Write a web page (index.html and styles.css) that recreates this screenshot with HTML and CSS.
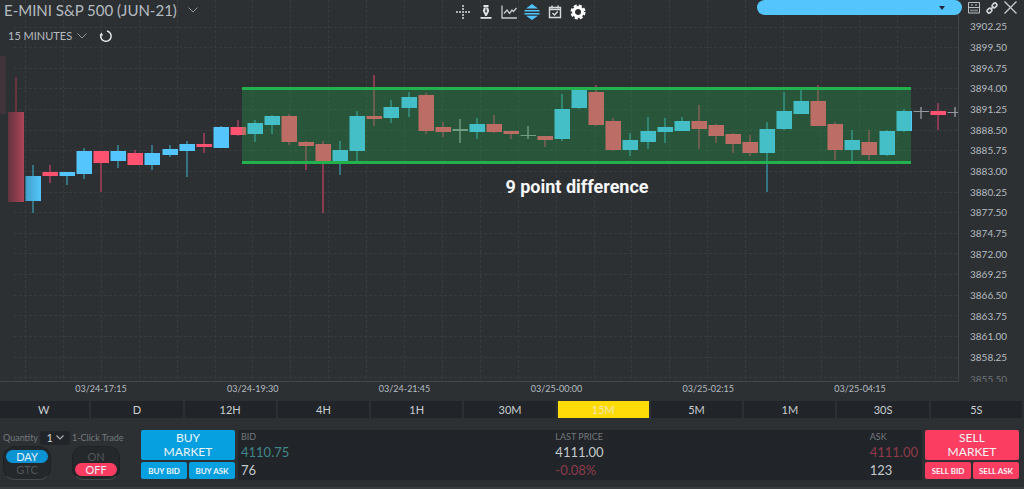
FILE: index.html
```html
<!DOCTYPE html>
<html lang="en">
<head>
<meta charset="utf-8">
<meta name="viewport" content="width=device-width, initial-scale=1">
<title>E-MINI S&amp;P 500 (JUN-21)</title>
<link rel="stylesheet" href="styles.css">
</head>
<body>
<main class="app">
  <section class="chart" aria-label="Price chart">
    <div class="plot">
      <svg class="plot-svg" id="plot" viewBox="0 0 958 381" preserveAspectRatio="none" role="img" aria-label="15 minute candles">
        <defs>
          <linearGradient id="fadeRed"><stop offset="0" stop-color="#63333d"/><stop offset="1" stop-color="#ad4557"/></linearGradient>
          <linearGradient id="fadeBlue"><stop offset="0" stop-color="#419fc8"/><stop offset="1" stop-color="#54c6fd"/></linearGradient>
        </defs>
        <g id="grid"></g>
        <rect x="0" y="56" width="6" height="58" fill="#40343a"/>
        <rect x="15" y="77" width="2" height="36" fill="#66343f"/>
        <rect x="8" y="112" width="16" height="90" fill="url(#fadeRed)"/>
        <g id="candles"></g>
        <rect x="242" y="87" width="669" height="77" fill="#22b14c" fill-opacity=".3"/>
        <rect x="242" y="87" width="669" height="3" fill="#22b14c"/>
        <rect x="242" y="161" width="669" height="3" fill="#22b14c"/>
      </svg>
      <p class="note">9 point difference</p>
    </div>
    <ol class="prices">
      <li>3902.25</li><li>3899.50</li><li>3896.75</li><li>3894.00</li><li>3891.25</li><li>3888.50</li>
      <li>3885.75</li><li>3883.00</li><li>3880.25</li><li>3877.50</li><li>3874.75</li><li>3872.00</li>
      <li>3869.25</li><li>3866.50</li><li>3863.75</li><li>3861.00</li><li>3858.25</li><li class="fading">3855.50</li>
    </ol>
    <ol class="times">
      <li>03/24-17:15</li><li>03/24-19:30</li><li>03/24-21:45</li><li>03/25-00:00</li><li>03/25-02:15</li><li>03/25-04:15</li>
    </ol>

    <header class="topbar">
      <div class="heading">
        <label class="pick pick-title">
          <select aria-label="Contract"><option>E-MINI S&amp;P 500 (JUN-21)</option></select>
          <svg width="10" height="6" viewBox="0 0 10 6"><path d="M0.5 0.5 5 5 9.5 0.5" fill="none" stroke="#8e979b"/></svg>
        </label>
        <div class="interval">
          <label class="pick pick-interval">
            <select aria-label="Interval"><option>15 MINUTES</option></select>
            <svg width="10" height="6" viewBox="0 0 10 6"><path d="M0.5 0.5 5 5 9.5 0.5" fill="none" stroke="#8e979b"/></svg>
          </label>
          <button class="icon" aria-label="Reload">
            <svg width="14" height="14" viewBox="0 0 14 14"><path d="M8 2A5.200 5.200 0 1 1 2 5.500" fill="none" stroke="#e6eaec" stroke-width="1.500"/><path d="M.5 6.500 2.500 3.500 4.200 6.500z" fill="#e6eaec"/></svg>
          </button>
        </div>
      </div>
      <div class="tools">
        <button class="icon" aria-label="Crosshair">
          <svg width="16" height="16" viewBox="0 0 16 16" fill="none" stroke="#d5dadc" stroke-width="1.500"><path d="M8 1v2M8 4v2M8 10v2M8 13v2M1 8h2M4 8h2M10 8h2M13 8h2M7 8h2"/></svg>
        </button>
        <button class="icon" aria-label="Draw">
          <svg width="16" height="16" viewBox="0 0 16 16"><path d="M5.500 1h5v2h-5zM5.800 3.500h4.400l1 3.500L8.700 12H7.300L4.800 7z" fill="#dfe3e5"/><path d="M8 4.500v2.500" stroke="#2d3033"/><circle cx="8" cy="7.500" r="1" fill="#2d3033"/><path d="M2.500 13h11v1.800h-11z" fill="#dfe3e5"/></svg>
        </button>
        <button class="icon" aria-label="Indicators">
          <svg width="16" height="16" viewBox="0 0 16 16" fill="none" stroke="#c5cbce" stroke-width="1.300"><path d="M1 1.500v12.500h15"/><path d="M3 9.500 6 6l2.500 3.500L11 6l1.500 1.500L15.500 4"/></svg>
        </button>
        <button class="icon" aria-label="Depth">
          <svg width="16" height="16" viewBox="0 0 16 16" fill="#50c3fb"><path d="M8 0l6 4.500H2zM.5 6h15v1.500H.5zM.5 9h15v1.500H.5zM2 11.800h12L8 16z"/></svg>
        </button>
        <button class="icon" aria-label="Calendar">
          <svg width="16" height="16" viewBox="0 0 16 16" fill="none" stroke="#d5dadc" stroke-width="1.400"><path d="M2.500 3.500h11v10h-11zM2.500 5.500h11M5 1.500v3M11 1.500v3M5.500 9l2 2 3.200-3.500"/></svg>
        </button>
        <button class="icon" aria-label="Settings">
          <svg width="16" height="16" viewBox="0 0 16 16" fill="none" stroke="#fff"><circle cx="8" cy="8" r="4.500" stroke-width="3"/><circle cx="8" cy="8" r="6.500" stroke-width="2" stroke-dasharray="3.100 2.005"/></svg>
        </button>
      </div>
      <div class="window-tools">
        <label class="account">
          <select aria-label="Account"><option></option></select>
          <svg width="6" height="4" viewBox="0 0 6 4"><path d="M0 0h6L3 4z" fill="#1d2a33"/></svg>
        </label>
        <button class="icon" aria-label="Layout">
          <svg width="12" height="12" viewBox="0 0 12 12" fill="none" stroke="#b9c0c3"><path d="M.5 .5h11v10.500H.5zM.5 5.500h11M3 3h2M7 3h2"/><path d="M3 7.500v2M5 7.500v2M7 7.500v2M9 7.500v2"/></svg>
        </button>
        <button class="icon" aria-label="Link">
          <svg width="12" height="12" viewBox="0 0 12 12" fill="none" stroke="#d0d6d8" stroke-width="1.600"><rect x="6" y="1.500" width="5" height="3.800" rx="1.900" transform="rotate(-45 8.500 3.400)"/><rect x="1" y="6.700" width="5" height="3.800" rx="1.900" transform="rotate(-45 3.500 8.600)"/><path d="M4.500 7.500l3-3"/></svg>
        </button>
        <button class="icon" aria-label="Close">
          <svg width="13" height="13" viewBox="0 0 13 13" fill="none" stroke="#c9cfd1" stroke-width="1.300"><path d="M.5 .5l12 12M12.500 .5l-12 12"/></svg>
        </button>
      </div>
    </header>
  </section>

  <nav class="frames" aria-label="Timeframe">
    <button>W</button><button>D</button><button>12H</button><button>4H</button><button>1H</button><button>30M</button><button class="active" aria-pressed="true">15M</button><button>5M</button><button>1M</button><button>30S</button><button>5S</button>
  </nav>

  <section class="ticket" aria-label="Order ticket">
    <div class="options">
      <div class="option">
        <div class="option-head">
          <label for="qty">Quantity</label>
          <span class="qty">
            <select id="qty"><option>1</option></select>
            <svg width="8" height="5" viewBox="0 0 8 5"><path d="M.5 .5 4 4 7.500 .5" fill="none" stroke="#aab1b4" stroke-width="1.200"/></svg>
          </span>
        </div>
        <div class="switch blue" role="radiogroup" aria-label="Duration">
          <label><input type="radio" name="tif" checked><span>DAY</span></label>
          <label><input type="radio" name="tif"><span>GTC</span></label>
        </div>
      </div>
      <div class="option">
        <div class="option-head" id="oneclick">1-Click Trade</div>
        <div class="switch red" role="radiogroup" aria-labelledby="oneclick">
          <label><input type="radio" name="click"><span>ON</span></label>
          <label><input type="radio" name="click" checked><span>OFF</span></label>
        </div>
      </div>
    </div>
    <div class="side buy">
      <button class="market">BUY<br>MARKET</button>
      <button>BUY BID</button>
      <button>BUY ASK</button>
    </div>
    <div class="quotes">
      <dl><dt>BID</dt><dd class="teal">4110.75</dd><dd>76</dd></dl>
      <dl><dt>LAST PRICE</dt><dd>4111.00</dd><dd class="rose">-0.08%</dd></dl>
      <dl><dt>ASK</dt><dd class="rose">4111.00</dd><dd>123</dd></dl>
    </div>
    <div class="side sell">
      <button class="market">SELL<br>MARKET</button>
      <button>SELL BID</button>
      <button>SELL ASK</button>
    </div>
  </section>
</main>
<script src="chart.js"></script>
</body>
</html>
```

FILE: styles.css
```css
* { box-sizing: border-box; }

body {
  margin: 0;
  background: #2d3033;
  color: #b4bcc0;
  font-family: Lato, "Liberation Sans", sans-serif;
  font-size: 10px;
}

button, select {
  appearance: none;
  margin: 0;
  padding: 0;
  border: 0;
  background: none;
  color: inherit;
  font: inherit;
}

svg { display: block; }
ol, dl, dd, p { margin: 0; padding: 0; list-style: none; }

.app {
  display: flex;
  flex-direction: column;
  min-height: 100vh;
  overflow: hidden;
}

/* Chart */
.chart {
  position: relative;
  flex: 1;
  display: grid;
  grid-template-columns: 1fr 65px;
  grid-template-rows: 1fr 19px;
}

.plot {
  position: relative;
  min-height: 240px;
  border-right: 1px solid #43474a;
  border-bottom: 1px solid #43474a;
}

.plot-svg {
  position: absolute;
  inset: 0;
  width: 100%;
  height: 100%;
}

.note {
  position: absolute;
  left: 0;
  right: 0;
  top: 46%;
  padding-left: 196px;
  color: #f4f6f7;
  font-family: Roboto, sans-serif;
  font-size: 18px;
  font-weight: 700;
  line-height: 24px;
  text-align: center;
}

.prices {
  display: grid;
  grid-auto-rows: 1fr;
  align-items: center;
  margin-bottom: -6px;
  padding: 16px 0 0 11px;
  line-height: 14px;
}

.prices .fading {
  height: 8px;
  overflow: hidden;
  color: #6d7478;
  line-height: 10px;
}

.times {
  display: grid;
  grid-template-columns: repeat(6, 1fr);
  padding: 0 23px 0 25px;
  font-size: 9px;
  line-height: 14px;
  text-align: center;
}

/* Controls over the chart */
.topbar {
  position: absolute;
  inset: 0 0 auto;
  display: grid;
  grid-template-columns: 1fr auto 1fr;
  align-items: start;
}

.icon {
  display: flex;
  align-items: center;
  justify-content: center;
}

.pick {
  display: inline-flex;
  align-items: center;
}

.heading { padding-left: 4px; }
.pick-title { gap: 10px; font-size: 15px; line-height: 20px; }
.pick-interval { gap: 4px; font-size: 11px; line-height: 16px; }

.interval {
  display: flex;
  align-items: center;
  gap: 12px;
  padding: 8px 4px;
}

.tools {
  display: flex;
  gap: 7px;
  padding: 4px 0 0 16px;
}

.window-tools {
  display: flex;
  justify-content: flex-end;
  align-items: center;
  gap: 6px;
  padding-right: 7px;
}

.account {
  position: relative;
  width: 205px;
  height: 15px;
  border-radius: 8px;
  background: #54c6fd;
}

.account select { width: 100%; height: 15px; }
.account svg { position: absolute; right: 17px; top: 6px; pointer-events: none; }

/* Timeframes */
.frames {
  display: grid;
  grid-template-columns: repeat(11, 1fr);
  gap: 2px;
  margin: 0 2px 0 -2px;
}

.frames button {
  height: 17px;
  background: #212428;
  color: #c9cfd2;
  font-size: 11px;
  line-height: 17px;
}

.frames .active { background: #ffdb08; color: #eee9b4; }

/* Order ticket */
.ticket {
  display: flex;
  gap: 3px;
  padding: 12px 5px 7px 3px;
  border-bottom: 2px solid #3a3d40;
}

.options {
  display: flex;
  gap: 2px;
  width: 135px;
  color: #72797d;
}

.option-head {
  display: flex;
  align-items: center;
  gap: 2px;
  height: 15px;
  font-size: 9px;
  white-space: nowrap;
}

.qty {
  display: flex;
  align-items: center;
  justify-content: center;
  gap: 2px;
  width: 30px;
  height: 14px;
  border-radius: 3px;
  background: #212428;
  color: #d0d6d8;
  font-size: 11px;
}

.switch {
  width: 48px;
  margin-top: 1px;
  padding: 3px 2px;
  border: 1px solid #1f2225;
  border-bottom-color: #45494c;
  border-radius: 12px;
  background: #25282b;
  color: #50565a;
  font-size: 11px;
}

.switch label { display: block; position: relative; }
.switch input { position: absolute; inset: 0; margin: 0; opacity: 0; }
.switch span {
  display: block;
  border-radius: 7px;
  line-height: 13px;
  text-align: center;
}

.switch input:checked + span { color: #e6f0f5; }
.blue input:checked + span { background: #0b93d3; }
.red input:checked + span { background: #fb3d62; }

.side {
  flex: none;
  display: grid;
  grid-template-columns: 1fr 1fr;
  grid-template-rows: 30px 17px;
  gap: 2px;
  width: 94px;
}

.side button {
  border-radius: 2px;
  color: #f2f5f7;
  font-size: 8px;
  font-weight: 700;
  white-space: nowrap;
}

.side .market {
  grid-column: 1 / -1;
  font-size: 12px;
  font-weight: 400;
  line-height: 14px;
}

.buy button { background: #069fdf; }
.sell button { background: #fb3d62; }

.quotes {
  flex: 1;
  display: flex;
  justify-content: space-between;
  padding: 0 4px 0 3px;
  background: #212428;
}

.quotes dt { color: #72797d; font-size: 9px; line-height: 13px; }
.quotes dd { color: #c3cacd; font-size: 13px; line-height: 18px; }
.quotes .teal { color: #41868a; }
.quotes .rose { color: #8f3b4b; }
```

FILE: chart.js
```javascript
const NS = "http://www.w3.org/2000/svg";
const FILL = { b: "#54c6fd", r: "#ff5271", n: "#9299a0" };
const WICK = { b: "#39899a", r: "#a8405a", n: "#8a8f98" };

// High, low, body top, body bottom, direction.
const candles = [
  [165, 213, 176, 201, "b"], [165, 183, 172, 176, "r"], [172, 185, 172, 176, "b"],
  [148, 179, 151, 174, "b"], [151, 192, 151, 163, "r"], [145, 168, 151, 161, "b"],
  [150, 165, 153, 165, "r"], [145, 170, 153, 165, "b"], [145, 157, 149, 155, "b"],
  [141, 177, 144, 151, "b"], [133, 153, 144, 147, "r"], [126, 148, 127, 148, "b"],
  [120, 136, 127, 135, "r"], [120, 142, 123, 134, "b"], [115, 134, 116, 125, "b"],
  [114, 145, 116, 142, "r"], [141, 170, 142, 146, "r"], [141, 213, 144, 161, "r"],
  [141, 175, 150, 161, "b"], [111, 161, 116, 151, "b"], [75, 126, 116, 119, "r"],
  [100, 123, 107, 118, "b"], [92, 117, 97, 108, "b"], [93, 134, 95, 131, "r"],
  [122, 137, 127, 132, "r"], [119, 143, 129, 131, "n"], [118, 139, 124, 132, "b"],
  [115, 133, 124, 132, "r"], [131, 139, 131, 134, "r"], [126, 139, 135, 136, "n"],
  [136, 147, 136, 140, "r"], [94, 141, 109, 139, "b"], [90, 109, 90, 108, "b"],
  [85, 126, 92, 125, "r"], [118, 151, 121, 150, "r"], [133, 156, 140, 150, "b"],
  [117, 149, 131, 142, "b"], [118, 143, 127, 132, "b"], [117, 131, 121, 131, "b"],
  [105, 149, 121, 129, "r"], [124, 143, 125, 136, "r"], [133, 153, 134, 144, "r"],
  [135, 156, 142, 153, "r"], [122, 192, 129, 153, "b"], [92, 130, 111, 129, "b"],
  [90, 114, 101, 114, "b"], [85, 126, 101, 126, "r"], [122, 160, 124, 150, "r"],
  [130, 161, 140, 150, "b"], [130, 160, 142, 155, "r"], [130, 156, 131, 155, "b"],
  [109, 132, 111, 131, "b"], [107, 119, 111, 112, "n"], [103, 130, 111, 115, "r"],
  [107, 117, 112, 113, "n"]
];

function rect(parent, x, y, width, height, fill) {
  const el = document.createElementNS(NS, "rect");
  Object.entries({ x, y, width, height, fill }).forEach(([k, v]) => el.setAttribute(k, v));
  parent.append(el);
}

function line(parent, x1, y1, x2, y2) {
  const el = document.createElementNS(NS, "line");
  Object.entries({ x1, y1, x2, y2, stroke: "#373b3e", "stroke-dasharray": "3 2" })
    .forEach(([k, v]) => el.setAttribute(k, v));
  parent.append(el);
}

const grid = document.getElementById("grid");
for (let i = 0; i < 25; i++) {
  const x = Math.round(25 + i * 37.9) + 0.5;
  line(grid, x, 0, x, 381);
}
for (let i = 0; i < 18; i++) {
  const y = Math.round(6 + i * 20.62 + 20.62) + 0.5;
  line(grid, 14, y, 958, y);
}

const layer = document.getElementById("candles");
candles.forEach(([high, low, top, bottom, kind], i) => {
  const x = Math.round(33 + i * 17.07);
  rect(layer, x - 0.75, high, 1.5, low - high, WICK[kind]);
  rect(layer, x - 7.5, top, 15.5, bottom - top, i === 0 ? "url(#fadeBlue)" : FILL[kind]);
});
```
